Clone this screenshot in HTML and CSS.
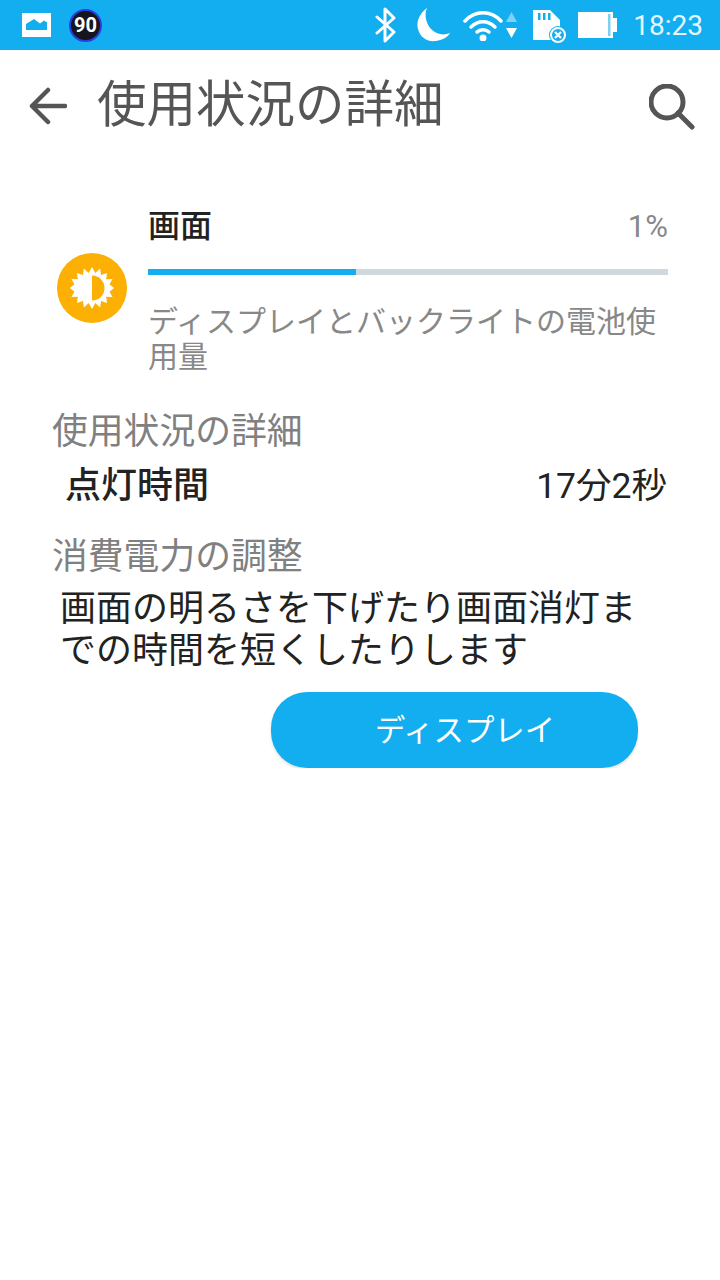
FILE: index.html
```html
<!DOCTYPE html>
<html lang="ja">
<head>
    <meta charset="UTF-8">
    <meta name="viewport" content="width=device-width, initial-scale=1.0">
    <title>使用状況の詳細</title>
    <link rel="stylesheet" href="styles.css">
</head>
<body>
    <!-- Status bar -->
    <div class="status-bar">
        <div class="status-left">
            <svg class="icon-gallery" width="29" height="24" viewBox="0 0 29 24">
                <path fill="#fff" fill-rule="evenodd" d="M0 0H29V24H0ZM4 17H25V9.500L22 7.500L18 10.500L12 6L4 11Z"/>
            </svg>
            <div class="badge-90">90</div>
        </div>
        <div class="status-right">
            <svg class="icon-bt" width="24" height="36" viewBox="0 0 24 36">
                <path fill="none" stroke="#fff" stroke-width="3" stroke-linejoin="round" stroke-linecap="round" d="M4 10L21 25L12 34V2L21 11L4 26"/>
            </svg>
            <svg class="icon-moon" width="35" height="34" viewBox="0 0 35 34">
                <path fill="#fff" d="M11 0C3 6 0 14 2 21C4 30 12 34 20 33C26 32 31 30 34 25C27 28 20 26 15 21C10 15 8 7 11 0Z"/>
            </svg>
            <svg class="icon-wifi" width="54" height="32" viewBox="0 0 54 32">
                <g fill="none" stroke="#fff" stroke-width="3.500" stroke-linecap="round">
                    <path d="M2 12C12 1 28 1 38 12"/>
                    <path d="M8 18C15 11 25 11 32 18"/>
                    <path d="M14 23C17 20 23 20 26 23"/>
                </g>
                <circle cx="20" cy="29" r="3.500" fill="#fff"/>
                <path fill="#7fd0f5" d="M43 13L48.500 3L54 13Z"/>
                <path fill="#fff" d="M43 19H54L48.500 29Z"/>
            </svg>
            <svg class="icon-sd" width="34" height="34" viewBox="0 0 34 34">
                <path fill="#fff" fill-rule="evenodd" d="M0 0H17L27 10V30H0ZM5 3V10H7.500V3ZM10 3V10H12.500V3ZM15 3V10H17.500V3Z"/>
                <circle cx="25" cy="25" r="9" fill="#12aeef"/>
                <circle cx="25" cy="25" r="7" fill="none" stroke="#fff" stroke-width="2"/>
                <path stroke="#fff" stroke-width="2.200" d="M22 22L28 28M28 22L22 28"/>
            </svg>
            <svg class="icon-battery" width="39" height="26" viewBox="0 0 39 26">
                <path fill="#fff" d="M0 0H35V6H39V20H35V26H0Z"/>
                <rect x="30" y="2" width="2.500" height="22" fill="#7fd0f5"/>
            </svg>
            <span class="clock">18:23</span>
        </div>
    </div>

    <!-- App bar -->
    <div class="app-bar">
        <svg class="icon-back" width="38" height="38" viewBox="0 0 38 38">
            <path fill="none" stroke="#555" stroke-width="4.500" stroke-linecap="round" stroke-linejoin="round" d="M36 19H3M19 3L3 19L19 35"/>
        </svg>
        <h1 class="app-title">使用状況の詳細</h1>
        <svg class="icon-search" width="46" height="46" viewBox="0 0 46 46">
            <circle cx="18" cy="18" r="16" fill="none" stroke="#555" stroke-width="5"/>
            <path stroke="#555" stroke-width="5" stroke-linecap="round" d="M29 29L43 43"/>
        </svg>
    </div>

    <!-- Usage item -->
    <div class="usage-item">
        <div class="usage-icon">
            <svg width="70" height="70" viewBox="0 0 70 70">
                <circle cx="35" cy="35" r="35" fill="#fbb003"/>
                <path fill="#fff" transform="translate(35 35) scale(.96) translate(-35 -35)" d="M35 13L38.500 19.500L43.400 14.800L44.500 21.500L50.600 19.400L49.800 25.800L56.400 25.500L53.300 31L58 35L53.300 39L56.400 44.500L49.800 44.200L50.600 50.600L44.500 48.500L43.400 55.200L38.500 50.500L35 57L31.500 50.500L26.600 55.200L25.500 48.500L19.400 50.600L20.200 44.200L13.600 44.500L16.700 39L12 35L16.700 31L13.600 25.500L20.200 25.800L19.400 19.400L25.500 21.500L26.600 14.800L31.500 19.500Z"/>
                <path fill="#fbb003" d="M35 22.500C42 22.500 47.500 28 47.500 35C47.500 42 42 47.500 35 47.500Z"/>
            </svg>
        </div>
        <div class="usage-body">
            <div class="usage-head">
                <span class="usage-name">画面</span>
                <span class="usage-percent">1%</span>
            </div>
            <div class="usage-bar">
                <div class="usage-bar-fill" style="width: 40%"></div>
            </div>
            <p class="usage-desc">ディスプレイとバックライトの電池使用量</p>
        </div>
    </div>

    <!-- Details -->
    <div class="section-label label-detail">使用状況の詳細</div>
    <div class="detail-row">
        <span class="detail-name">点灯時間</span>
        <span class="detail-value">17分2秒</span>
    </div>

    <div class="section-label label-adjust">消費電力の調整</div>
    <p class="advice">画面の明るさを下げたり画面消灯までの時間を短くしたりします</p>
    <div class="button-row">
        <button class="display-button">ディスプレイ</button>
    </div>
</body>
</html>
```

FILE: styles.css
```css
body {
    margin: 0;
    background-color: white;
    font-family: Roboto, "Noto Sans CJK JP", sans-serif;
    color: #222;
}

.status-bar {
    height: 50px;
    background-color: #12aeef;
    display: flex;
    align-items: center;
    justify-content: space-between;
    padding: 0 17px 0 22px;
}

.status-left {
    display: flex;
    align-items: center;
    gap: 18px;
}

.badge-90 {
    width: 33px;
    height: 33px;
    box-sizing: border-box;
    border-radius: 50%;
    background-color: #15151f;
    border: 2px solid #2c3de0;
    color: white;
    font-size: 20px;
    font-weight: 700;
    line-height: 29px;
    text-align: center;
}

.status-right {
    display: flex;
    align-items: center;
    gap: 16px;
}

.icon-bt {
    margin-right: 3px;
}

.icon-wifi {
    margin-left: -4px;
}

.icon-sd {
    margin-top: 3px;
    margin-left: 0;
    margin-right: -5px;
}

.clock {
    color: #e6f6fd;
    font-size: 28px;
}

.app-bar {
    height: 108px;
    display: flex;
    align-items: center;
    padding: 0 25px 0 29px;
}

.icon-back {
    margin-top: 4px;
}

.icon-search {
    margin-top: 5px;
}

.app-title {
    flex: 1;
    margin: 0 0 8px 30px;
    font-size: 49.500px;
    font-weight: 400;
    color: #555;
}

.usage-item {
    display: flex;
    align-items: center;
    padding: 44px 52px 0 57px;
}

.usage-icon {
    width: 70px;
    height: 70px;
    margin-right: 21px;
}

.usage-body {
    flex: 1;
}

.usage-head {
    display: flex;
    justify-content: space-between;
    align-items: center;
    height: 42px;
}

.usage-name {
    font-size: 32px;
    font-weight: 500;
    color: #222;
}

.usage-percent {
    font-size: 31px;
    color: #888;
    margin-top: 6px;
}

.usage-bar {
    height: 6px;
    margin-top: 25px;
    background-color: #cfd8dc;
}

.usage-bar-fill {
    height: 100%;
    background-color: #12aeef;
}

.usage-desc {
    margin: 29px 0 0;
    font-size: 30px;
    line-height: 35px;
    color: #888;
}

.section-label {
    margin-left: 52px;
    font-size: 35.800px;
    line-height: 44px;
    color: #808080;
}

.label-detail {
    margin-top: 36px;
}

.label-adjust {
    margin-top: 25px;
}

.detail-row {
    display: flex;
    justify-content: space-between;
    align-items: center;
    height: 56px;
    padding: 0 53px 0 65px;
}

.detail-name {
    font-size: 36px;
    font-weight: 500;
    color: #222;
}

.detail-value {
    font-size: 35.500px;
    color: #222;
}

.advice {
    margin: 9px 76px 0 60px;
    font-size: 36px;
    line-height: 42px;
    color: #222;
}

.button-row {
    display: flex;
    justify-content: flex-end;
    padding-right: 82px;
    margin-top: 20px;
}

.display-button {
    width: 367px;
    height: 76px;
    padding: 0 0 4px 21px;
    border: none;
    border-radius: 36px;
    background-color: #12aeef;
    box-shadow: 0 2px 3px rgba(0, 0, 0, 0.12);
    color: white;
    font-family: inherit;
    font-size: 30.400px;
}
```
